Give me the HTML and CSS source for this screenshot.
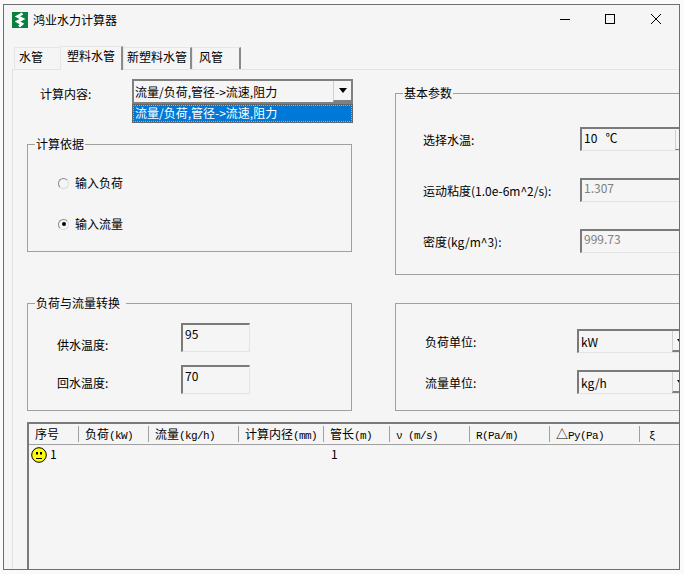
FILE: index.html
```html
<!DOCTYPE html>
<html lang="zh-CN">
<head>
<meta charset="utf-8">
<title>鸿业水力计算器</title>
<link rel="stylesheet" href="styles.css">
</head>
<body>
<div class="window">
  <header class="titlebar">
    <svg class="logo" width="16" height="16" viewBox="0 0 16 16"><rect width="16" height="16" fill="#0d7f3f"/><path d="M10.5 1.5 5.5 4.5 10.5 7 5.5 9.5 10 12 7 14.5" fill="none" stroke="#fff" stroke-width="2.6"/></svg>
    <span class="title">鸿业水力计算器</span>
    <div class="controls">
      <svg class="ctl" width="12" height="12" viewBox="0 0 12 12"><path d="M2 6.5H12" stroke="#000" fill="none"/></svg>
      <svg class="ctl" width="12" height="12" viewBox="0 0 12 12"><rect x="1.5" y="1.5" width="9" height="9" stroke="#000" fill="none"/></svg>
      <svg class="ctl" width="12" height="12" viewBox="0 0 12 12"><path d="M1 1 11 11M11 1 1 11" stroke="#000" fill="none"/></svg>
    </div>
  </header>
  <nav class="tabs">
    <div class="tab tab-water">水管</div>
    <div class="tab tab-active">塑料水管</div>
    <div class="tab tab-new">新塑料水管</div>
    <div class="tab tab-wind">风管</div>
  </nav>
  <main class="panel">
    <div class="upper">
      <div class="col-left">
        <div class="content-row">
          <span class="content-label">计算内容:</span>
          <div class="combo-wrap">
            <div class="combo combo-main"><span>流量/负荷,管径-&gt;流速,阻力</span><span class="combo-btn"><i class="arrow"></i></span></div>
            <div class="dropdown"><div class="dropdown-item">流量/负荷,管径-&gt;流速,阻力</div></div>
          </div>
        </div>
        <section class="group group-basis">
          <span class="legend">计算依据</span>
          <div class="radio-row"><span class="radio"></span><span>输入负荷</span></div>
          <div class="radio-row"><span class="radio radio-on"></span><span>输入流量</span></div>
        </section>
        <section class="group group-convert">
          <span class="legend legend-wide">负荷与流量转换</span>
          <div class="temp-row"><span class="temp-label temp-label-supply">供水温度:</span><div class="field field-temp">95</div></div>
          <div class="temp-row"><span class="temp-label temp-label-return">回水温度:</span><div class="field field-temp">70</div></div>
        </section>
      </div>
      <div class="col-right">
        <section class="group group-params">
          <span class="legend">基本参数</span>
          <div class="param-row"><span class="param-label">选择水温:</span><div class="field field-param field-select"><span>10&nbsp;&nbsp;&nbsp;℃</span><span class="combo-btn combo-btn-thin"></span></div></div>
          <div class="param-row"><span class="param-label">运动粘度(1.0e-6m^2/s):</span><div class="field field-param field-off">1.307</div></div>
          <div class="param-row"><span class="param-label">密度(kg/m^3):</span><div class="field field-param field-off">999.73</div></div>
        </section>
        <section class="group group-units">
          <div class="unit-row"><span class="unit-label">负荷单位:</span><div class="field field-unit"><span>kW</span><span class="combo-btn combo-btn-unit"><i class="arrow"></i></span></div></div>
          <div class="unit-row"><span class="unit-label">流量单位:</span><div class="field field-unit"><span>kg/h</span><span class="combo-btn combo-btn-unit"><i class="arrow"></i></span></div></div>
        </section>
      </div>
    </div>
    <section class="sheet">
      <div class="sheet-row sheet-head">
        <div class="cell">序号</div>
        <div class="cell">负荷<span class="mono">(kW)</span></div>
        <div class="cell">流量<span class="mono">(kg/h)</span></div>
        <div class="cell">计算内径<span class="mono">(mm)</span></div>
        <div class="cell">管长<span class="mono">(m)</span></div>
        <div class="cell"><span class="mono">ν (m/s)</span></div>
        <div class="cell"><span class="mono">R(Pa/m)</span></div>
        <div class="cell">△<span class="mono">Py(Pa)</span></div>
        <div class="cell cell-last"><span class="mono">ξ</span></div>
      </div>
      <div class="sheet-row sheet-data">
        <div class="data-cell data-first">
          <svg class="smiley" width="16" height="16" viewBox="0 0 16 16"><circle cx="8" cy="8" r="7.3" fill="#ffff00" stroke="#000"/><rect x="5" y="5" width="2" height="2.5" fill="#000"/><rect x="9" y="5" width="2" height="2.5" fill="#000"/><path d="M5 11.5H11" stroke="#000"/></svg>
          <span class="data-num">1</span>
        </div>
        <div class="data-cell"></div>
        <div class="data-cell"></div>
        <div class="data-cell"></div>
        <div class="data-cell data-len">1</div>
      </div>
    </section>
  </main>
</div>
</body>
</html>
```

FILE: styles.css
```css
* { box-sizing: border-box; }

html, body {
  margin: 0;
  height: 100%;
  background: #fafafa;
  overflow: hidden;
}

body {
  padding: 4px 0 0 3px;
  font: 12px/16px "Noto Sans CJK SC", "Liberation Sans", sans-serif;
  color: #000;
}

.window {
  width: 677px;
  height: 566px;
  border: 1px solid #6e6e6e;
  background: #f5f5f5;
  display: flex;
  flex-direction: column;
  overflow: hidden;
}

.titlebar {
  display: flex;
  align-items: center;
  height: 30px;
  flex: none;
  padding-left: 8px;
}

.logo { flex: none; }

.title { margin-left: 5px; }

.controls {
  display: flex;
  margin-left: auto;
  margin-right: 17px;
  padding-bottom: 2px;
  gap: 34px;
}

.ctl { display: block; }

.tabs {
  display: flex;
  align-items: flex-end;
  flex: none;
  height: 34px;
  padding-left: 10px;
}

.tab {
  display: flex;
  align-items: center;
  justify-content: center;
  height: 22px;
  padding-bottom: 3px;
  border-right: 2px solid #8a8a8a;
  border-left: 1px solid #e6e6e6;
  border-top: 1px solid #e6e6e6;
  white-space: nowrap;
}

.tab-water {
  width: 46px;
  border-right: 0;
  justify-content: flex-start;
  padding-left: 4px;
}
.tab-active {
  width: 63px;
  height: 24px;
  margin-bottom: -1px;
  position: relative;
  background: #f5f5f5;
  padding-bottom: 6px;
}
.tab-new { width: 69px; }
.tab-wind {
  width: 49px;
  justify-content: flex-start;
  padding-left: 6px;
}

.panel {
  flex: 1;
  min-height: 0;
  margin-left: 8px;
  border-left: 1px solid #e3e3e3;
  border-top: 1px solid #e3e3e3;
  padding-left: 14px;
  display: flex;
  flex-direction: column;
  overflow: hidden;
}

.upper {
  display: grid;
  grid-template-columns: 325px 300px;
  column-gap: 43px;
  flex: none;
  height: 352px;
}

.col-left {
  display: flex;
  flex-direction: column;
}

.content-row {
  display: flex;
  padding-top: 9px;
  height: 74px;
  flex: none;
}

.content-label {
  width: 105px;
  flex: none;
  padding-left: 13px;
  padding-top: 7px;
}

.combo-wrap { position: relative; }

.combo {
  display: flex;
  align-items: center;
  justify-content: space-between;
}

.combo-main {
  width: 221px;
  height: 25px;
  border: 2px solid #808080;
  background: #f5f5f5;
  padding-left: 1px;
}

.combo-btn {
  display: flex;
  align-items: center;
  justify-content: center;
  flex: none;
  width: 18px;
  height: 100%;
  border-left: 1px solid #d0d0d0;
  border-bottom: 2px solid #808080;
  background: #f5f5f5;
}

.arrow {
  display: block;
  width: 0;
  height: 0;
  border-left: 4px solid transparent;
  border-right: 4px solid transparent;
  border-top: 5px solid #000;
}

.dropdown {
  position: absolute;
  top: 25px;
  left: 0;
  width: 221px;
  height: 19px;
  border: 1px solid #666;
  background: #0078d7;
}

.dropdown-item {
  height: 100%;
  padding-left: 2px;
  color: #fff;
  line-height: 16px;
  outline: 1px dotted #f0a040;
  outline-offset: -1px;
}

.group {
  position: relative;
  border: 1px solid #a0a0a0;
}

.legend {
  position: absolute;
  top: -9px;
  left: 7px;
  padding: 0 1px;
  background: #f5f5f5;
}

.legend-wide { padding-right: 6px; }

.group-basis {
  width: 325px;
  height: 108px;
  padding: 30px 0 0 30px;
  display: flex;
  flex-direction: column;
  gap: 25px;
}

.radio-row {
  display: flex;
  align-items: center;
  gap: 6px;
  height: 16px;
}

.radio {
  position: relative;
  flex: none;
  width: 11px;
  height: 11px;
  border-radius: 50%;
  border: 1px solid #8a8a8a;
  border-right-color: #dcdcdc;
  border-bottom-color: #dcdcdc;
  background: #f5f5f5;
}

.radio-on::after {
  content: "";
  position: absolute;
  inset: 2.5px;
  border-radius: 50%;
  background: #000;
}

.group-convert {
  width: 325px;
  height: 108px;
  margin-top: 51px;
  padding: 19px 0 0 29px;
  display: flex;
  flex-direction: column;
  gap: 13px;
}

.temp-row {
  display: flex;
  align-items: flex-end;
}

.temp-label {
  width: 124px;
  flex: none;
}

.temp-label-supply { margin-bottom: -1px; }
.temp-label-return { margin-bottom: 3px; }

.field {
  display: flex;
  flex: none;
  background: #f5f5f5;
  border-top: 2px solid #7a7a7a;
  border-left: 2px solid #7a7a7a;
  border-right: 1px solid #e3e3e3;
  border-bottom: 1px solid #e3e3e3;
}

.field-temp {
  width: 69px;
  height: 29px;
  padding-left: 2px;
  padding-top: 1px;
  align-items: flex-start;
}

.col-right {
  display: flex;
  flex-direction: column;
  padding-top: 23px;
}

.group-params {
  width: 300px;
  height: 182px;
  padding: 33px 0 0 27px;
  display: flex;
  flex-direction: column;
  gap: 27px;
}

.param-row {
  display: flex;
  align-items: center;
  height: 24px;
}

.param-label {
  width: 157px;
  flex: none;
  padding-top: 2px;
}

.field-param {
  width: 112px;
  height: 24px;
  padding-left: 2px;
  align-items: center;
}

.field-select {
  align-items: flex-start;
  padding-top: 1px;
}

.combo-btn-thin {
  width: 16px;
  height: 20px;
  margin-left: auto;
  border-bottom: 1px solid #808080;
}

.field-off {
  color: #808080;
  align-items: flex-start;
}

.group-units {
  width: 300px;
  height: 108px;
  margin-top: 28px;
  padding: 25px 0 0 29px;
  display: flex;
  flex-direction: column;
  gap: 17px;
}

.unit-row {
  display: flex;
  align-items: center;
  height: 24px;
}

.unit-label {
  width: 152px;
  flex: none;
  padding-top: 2px;
}

.field-unit {
  width: 114px;
  height: 24px;
  align-items: center;
  padding-left: 2px;
  justify-content: space-between;
}

.combo-btn-unit {
  width: 18px;
  height: 21px;
  justify-content: flex-start;
  padding-left: 4px;
}

.combo-btn-unit .arrow {
  border-left-width: 3px;
  border-right-width: 3px;
  border-top-width: 4px;
}

.sheet {
  flex: 1;
  min-height: 0;
  width: 670px;
  border-top: 2px solid #7a7a7a;
  border-left: 2px solid #7a7a7a;
}

.sheet-row {
  display: grid;
  grid-template-columns: 50px 70px 90px 85px 66px 80px 80px 90px 59px;
}

.sheet-head {
  height: 21px;
  border-bottom: 1px solid #a0a0a0;
  align-items: center;
}

.cell {
  height: 16px;
  padding-left: 6px;
  border-right: 1px solid #a0a0a0;
  white-space: nowrap;
  line-height: 16px;
}

.cell-last {
  border-right: 0;
  padding-left: 9px;
}

.mono {
  font: 11px/16px "Liberation Mono", "DejaVu Sans Mono", monospace;
  letter-spacing: -0.6px;
}

.sheet-data {
  height: 22px;
  align-items: start;
  padding-top: 2px;
}

.data-first {
  display: flex;
  align-items: center;
  gap: 3px;
  padding-left: 2px;
}

.data-num { margin-top: -2px; }

.smiley { flex: none; }

.data-len {
  padding-left: 7px;
  margin-top: -1px;
}
```
